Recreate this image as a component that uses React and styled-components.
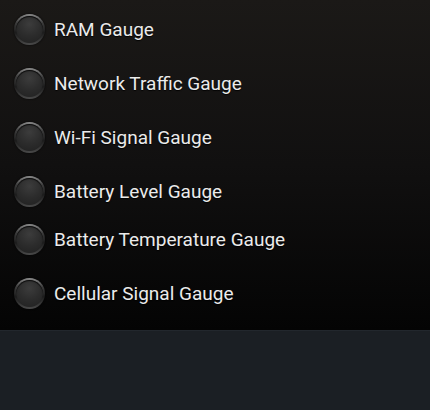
import styled, { createGlobalStyle } from "styled-components";

const Global = createGlobalStyle`
	body {
		margin: 0;
		background: #1b1f24;
		font-family: Roboto, "Liberation Sans", sans-serif;
	}
`

const Page = styled.div`
	width: 430px;
	height: 410px;
	background: #1b1f24;
	overflow: hidden;
`

const Panel = styled.div`
	padding: 2px 0 10px 0;
	background: linear-gradient(to bottom, #1b1917 0%, #111010 50%, #040404 100%);
	border-bottom: 1px solid #22272d;
`

const Row = styled.div`
	height: 54px;
	margin-top: ${p => p.$shift || 0}px;
	display: flex;
	align-items: center;
	padding-left: 14px;
	gap: 9px;
`

// outer ring, light at the top edge
const Radio = styled.div`
	width: 31px;
	height: 31px;
	border-radius: 50%;
	box-sizing: border-box;
	padding: 2px;
	background: linear-gradient(to bottom, #8a8a8a 0%, #3a3a3a 30%, #1c1c1c 60%, #4a4a4a 100%);
	box-shadow: 0 0 2px rgba(0,0,0,0.9);
`

const Dot = styled.div`
	width: 100%;
	height: 100%;
	border-radius: 50%;
	background: radial-gradient(circle at 50% 30%, #3c3c3c 0%, #2c2c2c 50%, #202020 100%);
	box-shadow: inset 0 1px 1px rgba(0,0,0,0.8);
`

const Label = styled.span`
	color: #ebebeb;
	font-size: 19px;
	text-shadow: 0 1px 1px rgba(0,0,0,0.9);
`

const items = [
	{ label: "RAM Gauge" },
	{ label: "Network Traffic Gauge" },
	{ label: "Wi-Fi Signal Gauge" },
	{ label: "Battery Level Gauge" },
	{ label: "Battery Temperature Gauge", shift: -6 },
	{ label: "Cellular Signal Gauge" },
]

const App = () => {
	return (
		<Page>
			<Global />
			<Panel>
				{items.map(it => (
					<Row key={it.label} $shift={it.shift}>
						<Radio><Dot /></Radio>
						<Label>{it.label}</Label>
					</Row>
				))}
			</Panel>
		</Page>
	)
}

export default App
